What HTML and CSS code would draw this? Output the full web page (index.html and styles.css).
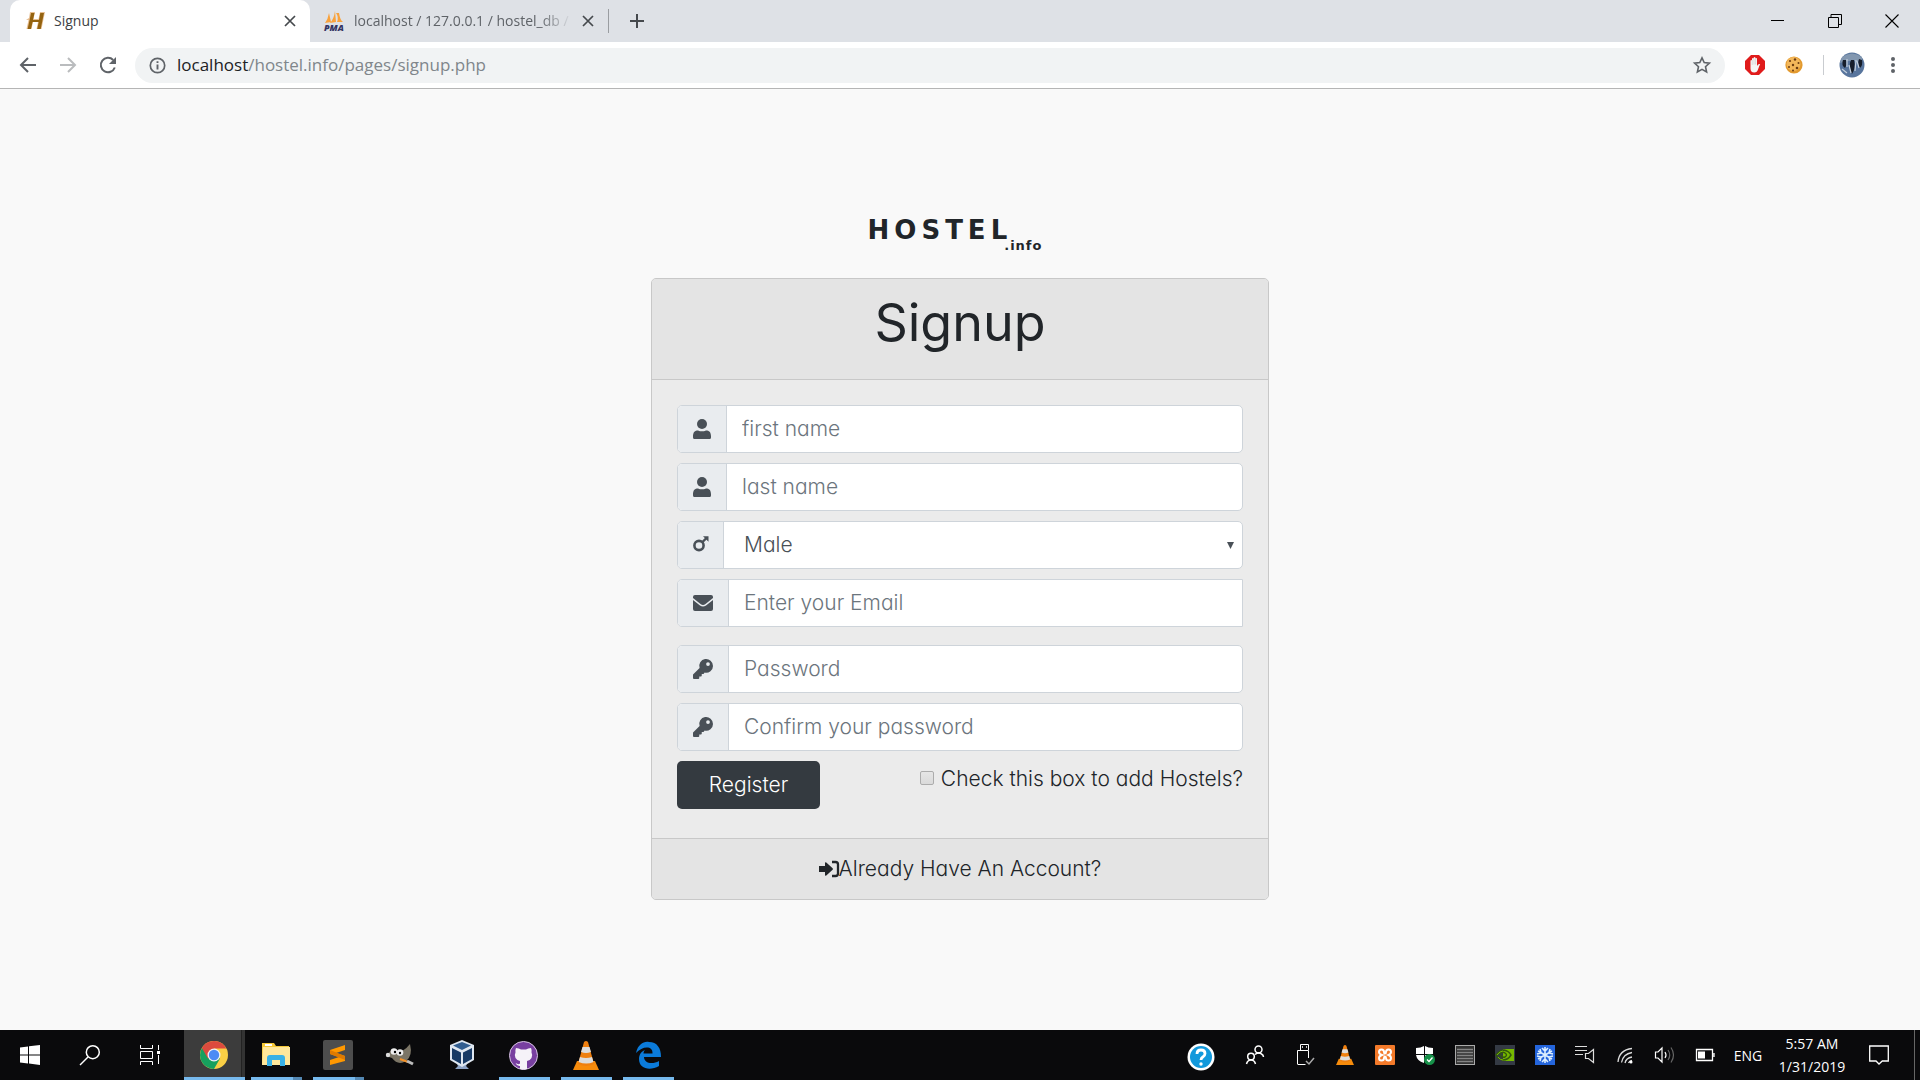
FILE: index.html
```html
<!DOCTYPE html>
<html lang="en">
<head>
<meta charset="utf-8">
<title>Signup</title>
<link rel="stylesheet" href="styles.css">
</head>
<body>
<header class="browser">
  <div class="tabstrip">
    <div class="tab tab-active">
      <svg class="favicon" width="20" height="20" viewBox="0 0 20 20"><path d="M4 1h5L7.500 8h5L14 1h5l-3.500 17h-5l1.500-7H7L5.500 18h-5L2.500 9H0l3-2z" fill="#e8bf93"/><path d="M5 2h3.500L7 9h6l1.300-7H18l-3.300 16H11.200l1.500-7H6.600L5 18H1.600L4 7z" fill="#946310"/></svg>
      <span class="tab-title">Signup</span>
      <button class="icon-btn" aria-label="Close Signup tab"><svg width="12" height="12" viewBox="0 0 12 12"><path d="M1 1l10 10M11 1L1 11" stroke="#45494d" stroke-width="1.700"/></svg></button>
    </div>
    <div class="tab">
      <svg class="favicon" width="20" height="20" viewBox="0 0 20 20"><path d="M5 2Q4 8 1 12l6-1zM11 0q-1 8-5 12l6-1zM12 2q3 4 1 9h6q-3-2-4-9z" fill="#f9a23c"/><text x="0" y="20" font-family="Open Sans, sans-serif" font-size="9" font-weight="800" font-style="italic" fill="#343462">PMA</text></svg>
      <span class="tab-title tab-fade">localhost / 127.0.0.1 / hostel_db / users</span>
      <button class="icon-btn" aria-label="Close database tab"><svg width="12" height="12" viewBox="0 0 12 12"><path d="M1 1l10 10M11 1L1 11" stroke="#45494d" stroke-width="1.700"/></svg></button>
    </div>
    <button class="icon-btn new-tab" aria-label="New tab"><svg width="16" height="16" viewBox="0 0 16 16"><path d="M8 1v14M1 8h14" stroke="#45494d" stroke-width="2"/></svg></button>
    <div class="window-controls">
      <button class="icon-btn" aria-label="Minimize"><svg width="14" height="14" viewBox="0 0 14 14"><path d="M0 6.500h13" stroke="#000"/></svg></button>
      <button class="icon-btn" aria-label="Restore"><svg width="14" height="14" viewBox="0 0 14 14"><path d="M.5 3.500h10v10H.5zM3 3.500v-3h10.500v10H11" fill="none" stroke="#000"/></svg></button>
      <button class="icon-btn" aria-label="Close"><svg width="14" height="14" viewBox="0 0 14 14"><path d="M.5.5l13 13M13.500.5l-13 13" stroke="#000" stroke-width="1.100"/></svg></button>
    </div>
  </div>
  <div class="toolbar">
    <button class="icon-btn nav-btn" aria-label="Back"><svg width="18" height="18" viewBox="0 0 18 18"><path d="M17 9H2.500M9 2L2 9l7 7" fill="none" stroke="#5f6368" stroke-width="2"/></svg></button>
    <button class="icon-btn nav-btn" aria-label="Forward"><svg width="18" height="18" viewBox="0 0 18 18"><path d="M1 9h14.500M9 2l7 7-7 7" fill="none" stroke="#babcbe" stroke-width="2"/></svg></button>
    <button class="icon-btn nav-btn" aria-label="Reload"><svg width="18" height="18" viewBox="0 0 18 18"><path d="M15.800 11.500A7.200 7.200 0 1 1 14.200 4" fill="none" stroke="#5f6368" stroke-width="2"/><path d="M17 1v7h-7z" fill="#5f6368"/></svg></button>
    <div class="omnibox">
      <svg width="17" height="17" viewBox="0 0 17 17"><circle cx="8.500" cy="8.500" r="7.200" fill="none" stroke="#5f6368" stroke-width="1.700"/><path d="M8.500 7.500v5M8.500 4.200v1.900" stroke="#5f6368" stroke-width="1.900"/></svg>
      <span class="url"><b>localhost</b>/hostel.info/pages/signup.php</span>
      <svg width="18" height="18" viewBox="0 0 18 18"><path d="M9 1.800l2.200 4.800 5.200.6-3.900 3.500 1.100 5.200L9 13.300l-4.600 2.600 1.100-5.200L1.600 7.200l5.200-.6z" fill="none" stroke="#5f6368" stroke-width="1.600"/></svg>
    </div>
    <div class="extensions">
      <svg width="20" height="20" viewBox="0 0 20 20"><path d="M6 0h8l6 6v8l-6 6H6l-6-6V6z" fill="#e01b1b"/><path d="M5.500 11V5.500q1-1 1.500 0V3.500q1-1 1.700 0V2.500q1-1 1.700 0v1q1-1 1.600 0V11q1-2.500 3.200-2-1 2-2 5-1 3.500-4 3.500-3.700 0-3.700-4z" fill="#f5f5f5"/><path d="M7.200 5v5M9 4v5.500M10.600 4v5.500" stroke="#c9c9c9" stroke-width=".6"/></svg>
      <svg width="18" height="18" viewBox="0 0 18 18"><circle cx="9" cy="9" r="8.600" fill="#e39a2f"/><circle cx="8.500" cy="8" r="7" fill="#f3b75a"/><g fill="#6d3d12"><circle cx="5" cy="5" r="1.100"/><circle cx="10" cy="3.500" r="1.200"/><circle cx="13.500" cy="7" r="1"/><circle cx="8" cy="9" r="1.200"/><circle cx="4" cy="11" r="1"/><circle cx="12" cy="12" r="1.300"/><circle cx="8" cy="14.500" r="1"/></g></svg>
      <span class="divider"></span>
      <svg class="avatar" width="26" height="26" viewBox="0 0 26 26"><circle cx="13" cy="13" r="12.500" fill="#58759d"/><path d="M3 5q10-7 20 0v5Q12 7 1 11z" fill="#8297b0"/><path d="M4 8q-2 5 2 8 2-3 1-8zM12 8q-3 6 1 14 4-6 2-14zM20 7q-2 5 1 9 3-3 2-8z" fill="#171e2a"/><path d="M8 7v8M10 13l2 8M17 8l-1 11M18 9l2 7M3 17l5 4" stroke="#c3cfdd" stroke-width="1.200"/></svg>
      <button class="icon-btn" aria-label="Menu"><svg width="6" height="18" viewBox="0 0 6 18" fill="#5f6368"><circle cx="3" cy="3" r="2"/><circle cx="3" cy="9" r="2"/><circle cx="3" cy="15" r="2"/></svg></button>
    </div>
  </div>
</header>

<main class="page">
  <div class="brand"><span class="brand-name">HOSTEL</span><sub class="brand-suffix">.info</sub></div>
  <form class="card">
    <div class="card-header"><h1>Signup</h1></div>
    <div class="card-body">
      <div class="field">
        <label class="addon addon-user" for="first" aria-label="First name"><svg width="18" height="20" viewBox="0 0 18 20" fill="#495057"><circle cx="9" cy="5" r="5"/><path d="M0 17.500C0 13 2 11.500 5 11.500q4 1.700 8 0c3 0 5 1.500 5 6v1q0 1.500-1.500 1.500h-15Q0 20 0 18.500z"/></svg></label>
        <input id="first" class="control" type="text" placeholder="first name">
      </div>
      <div class="field">
        <label class="addon addon-user" for="last" aria-label="Last name"><svg width="18" height="20" viewBox="0 0 18 20" fill="#495057"><circle cx="9" cy="5" r="5"/><path d="M0 17.500C0 13 2 11.500 5 11.500q4 1.700 8 0c3 0 5 1.500 5 6v1q0 1.500-1.500 1.500h-15Q0 20 0 18.500z"/></svg></label>
        <input id="last" class="control" type="text" placeholder="last name">
      </div>
      <div class="field">
        <label class="addon addon-gender" for="gender" aria-label="Gender"><svg width="16" height="20" viewBox="0 0 16 20"><circle cx="6" cy="10.500" r="4.600" fill="none" stroke="#495057" stroke-width="2.600"/><path d="M9 7.500l4.500-4.500" stroke="#495057" stroke-width="2.400"/><path d="M10 1.200h5.500v5.500z" fill="#495057"/></svg></label>
        <select id="gender" class="control select"><option>Male</option><option>Female</option></select>
        <svg class="caret" width="7" height="7" viewBox="0 0 7 7"><path d="M0 0h7L3.500 7z" fill="#495057"/></svg>
      </div>
      <div class="field field-email">
        <label class="addon" for="email" aria-label="Email"><svg width="20" height="16" viewBox="0 0 20 16" fill="#495057"><path d="M0 3V2Q0 0 2 0h16q2 0 2 2v1l-7.500 6q-2.500 2-5 0z"/><path d="M0 5l7 5.500q3 2 6 0L20 5v9q0 2-2 2H2q-2 0-2-2z"/></svg></label>
        <input id="email" class="control" type="email" placeholder="Enter your Email">
      </div>
      <div class="field">
        <label class="addon" for="pass" aria-label="Password"><svg width="20" height="20" viewBox="0 0 512 512"><path fill="#495057" d="M512 176a176 176 0 0 1-213 172l-24 27a24 24 0 0 1-18 8h-33v40a24 24 0 0 1-24 24h-40v41a24 24 0 0 1-24 24H24a24 24 0 0 1-24-24v-78q0-10 7-17l162-162A176 176 0 1 1 512 176zM336 128a48 48 0 1 0 96 0 48 48 0 1 0-96 0z" fill-rule="evenodd"/></svg></label>
        <input id="pass" class="control" type="password" placeholder="Password">
      </div>
      <div class="field">
        <label class="addon" for="confirm" aria-label="Confirm password"><svg width="20" height="20" viewBox="0 0 512 512"><path fill="#495057" d="M512 176a176 176 0 0 1-213 172l-24 27a24 24 0 0 1-18 8h-33v40a24 24 0 0 1-24 24h-40v41a24 24 0 0 1-24 24H24a24 24 0 0 1-24-24v-78q0-10 7-17l162-162A176 176 0 1 1 512 176zM336 128a48 48 0 1 0 96 0 48 48 0 1 0-96 0z" fill-rule="evenodd"/></svg></label>
        <input id="confirm" class="control" type="password" placeholder="Confirm your password">
      </div>
      <div class="actions">
        <button class="register" type="submit">Register</button>
        <label class="check"><input type="checkbox">Check this box to add Hostels?</label>
      </div>
    </div>
    <div class="card-footer"><a href="#login"><svg width="20" height="18" viewBox="0 0 20 18" fill="#212529"><path d="M0 6h6V3.200q0-1.700 1.300-.6l6.300 5.600q.8.800 0 1.600l-6.300 5.600Q6 16.500 6 14.800V12H0z"/><path d="M13 2h3.500Q19 2 19 4.500v9q0 2.500-2.500 2.500H13" fill="none" stroke="#212529" stroke-width="2.300"/></svg>Already Have An Account?</a></div>
  </form>
</main>

<footer class="taskbar">
  <div class="system-buttons">
    <button class="icon-btn" aria-label="Start"><svg width="20" height="20" viewBox="0 0 20 20" fill="#fff"><path d="M0 2.500l8-1.100v8.100H0zM9 1.300L20 0v9.500H9zM0 10.500h8v8.100l-8-1.100zM9 10.500h11V20L9 18.600z"/></svg></button>
    <button class="icon-btn" aria-label="Search"><svg width="20" height="20" viewBox="0 0 20 20" fill="none" stroke="#fff" stroke-width="1.500"><circle cx="12.800" cy="7.200" r="6.500"/><path d="M8 12l-8 8"/></svg></button>
    <button class="icon-btn" aria-label="Task view"><svg width="20" height="20" viewBox="0 0 20 20" fill="none" stroke="#fff"><path d="M.5 0v3.500h12V0M.5 20v-3.500h12V20M.5 6.500h12v7H.5zM18.500 0v5M18.500 10v9"/><path d="M17 7.500h3" stroke-width="3"/></svg></button>
  </div>
  <div class="apps">
    <button class="app app-current app-open" aria-label="Chrome"><svg width="28" height="28" viewBox="0 0 28 28"><circle cx="14" cy="14" r="14" fill="#f9cf45"/><path d="M14 14L1.900 7A14 14 0 0 0 14 28l6-10.500z" fill="#17a05e"/><path d="M14 14v-6.500h12.400A14 14 0 0 0 1.900 7l6 10.500z" fill="#dc4b3e"/><circle cx="14" cy="14" r="6.500" fill="#f2f2f2"/><circle cx="14" cy="14" r="5.200" fill="#4c8bf5"/></svg></button>
    <button class="app app-open app-many" aria-label="File Explorer"><svg width="28" height="24" viewBox="0 0 28 24"><path d="M0 0h12l2 3h13v19H0z" fill="#f5c838"/><path d="M1 4h27v18H0z" fill="#ffe79b"/><path d="M3 2h7" stroke="#fff" stroke-width="2"/><path d="M5 23V15q0-3 3-3h12q3 0 3 3v8h-5v-6h-8v6z" fill="#39b1e6"/></svg></button>
    <button class="app app-open app-many" aria-label="Sublime Text"><svg width="30" height="30" viewBox="0 0 30 30"><rect width="30" height="30" rx="2" fill="#4d4d4d"/><path d="M7 10l15-5v5l-9 3 9 3v5L7 25v-5l9-3-9-3z" fill="#ff9800"/><path d="M7 10v4l15 6v-4z" fill="#df7a00"/></svg></button>
    <button class="app" aria-label="GIMP"><svg width="28" height="24" viewBox="0 0 28 24"><path d="M5 7q3 0 4 2 8 1 15-8 3 12-4 17-8 5-14-3L0 13q0-3 3-3z" fill="#7b7566"/><circle cx="2" cy="12" r="2.200" fill="#ddd"/><circle cx="8" cy="8.500" r="3.300" fill="#eee"/><circle cx="14" cy="9.500" r="3.300" fill="#eee"/><circle cx="9" cy="9" r="1.200"/><circle cx="14" cy="10" r="1.200"/><path d="M14 16l8 3" stroke="#f39228" stroke-width="2"/><path d="M21 18l6 3" stroke="#bbb" stroke-width="3"/></svg></button>
    <button class="app" aria-label="VirtualBox"><svg width="26" height="30" viewBox="0 0 26 30"><path d="M7 22h12l-2 4 3 3H6l3-3z" fill="#8da3c6"/><path d="M13 0l12 5v15l-12 7L1 20V5z" fill="#dfe7f1"/><path d="M13 2l9 3.500L13 10 4 5.500z" fill="#315d90"/><path d="M3 8l9 4.500V24l-9-5zM23 8l-9 4.500V24l9-5z" fill="#173a66"/></svg></button>
    <button class="app app-open" aria-label="GitHub Desktop"><svg width="29" height="29" viewBox="0 0 29 29"><circle cx="14.500" cy="14.500" r="14" fill="#783fa0" stroke="#d7c5e3"/><path d="M7 7q3 0 5 1.500h5Q19 7 22 7q1 2 .5 4.500Q24 14 22.500 17q-1.300 2.500-4.500 3v8q-3.500 1-7 0v-3q-3 .5-4.500-3 3 2 4.500.500V20q-3-.5-4.500-3-1.500-3 0-5.500Q6 9 7 7z" fill="#f5f2f8"/></svg></button>
    <button class="app app-open" aria-label="VLC"><svg width="26" height="29" viewBox="0 0 26 29"><path d="M4 20h18l4 9H0z" fill="#f78c0c"/><path d="M11 1q2-2 4 0l6 22q-8 4-16 0z" fill="#ef8010"/><path d="M9.500 6h7l1.500 5q-5 2-10 0zM7 16q6 2 12 0l1.500 5q-7 3-15 0z" fill="#ddd"/></svg></button>
    <button class="app app-open" aria-label="Edge"><svg width="26" height="28" viewBox="0 0 26 28"><path d="M1 12C3 3 9 0 14 1c8 0 12 6 12 15H9c0 6 8 8 15 4v5C15 30 4 28 4 18c0-5 3-8 6-9-1 1-1.500 2-1.500 3.500h9C18 4 7 5 1 12z" fill="#0b7bda"/></svg></button>
  </div>
  <div class="tray">
    <span class="tray-help"><svg width="28" height="28" viewBox="0 0 28 28"><circle cx="14" cy="14" r="13.500" fill="#fff"/><circle cx="14" cy="14" r="11" fill="#1299dc"/><path d="M10 11q0-4 4-4t4 3.500q0 2-2 3.300-2 1.200-2 3.200" fill="none" stroke="#fff" stroke-width="2.800"/><circle cx="14" cy="21" r="1.700" fill="#fff"/></svg></span>
    <span class="tray-people"><svg width="18" height="20" viewBox="0 0 18 20" fill="none" stroke="#fff" stroke-width="1.500"><circle cx="12.500" cy="4.500" r="3.500"/><circle cx="5" cy="11.500" r="3.300"/><path d="M.5 19q1-4 4.500-4t4.500 4M9 9.500q3.500-3 6.500-.5 2 1 2 3"/></svg></span>
    <span class="tray-icon"><svg width="16" height="22" viewBox="0 0 16 22" fill="none" stroke="#fff"><path d="M3.500 6V.5h8V6M.5 20V6.500h11V14M.5 20.500h8"/><path d="M5 3h1M9 3h1" stroke-width="1.500"/><path d="M9 17l3 3 5-6" stroke="#aaa" stroke-width="1.500"/></svg></span>
    <span class="tray-icon"><svg width="18" height="20" viewBox="0 0 26 29"><path d="M4 20h18l4 9H0z" fill="#f78c0c"/><path d="M11 1q2-2 4 0l6 22q-8 4-16 0z" fill="#ef8010"/><path d="M9.500 6h7l1.500 5q-5 2-10 0zM7 16q6 2 12 0l1.500 5q-7 3-15 0z" fill="#ddd"/></svg></span>
    <span class="tray-icon"><svg width="20" height="20" viewBox="0 0 20 20"><rect width="20" height="20" rx="1" fill="#f47a2a"/><path d="M7 10q-3-1-3-3 0-2.500 2.500-2.500Q9 4.500 9 7q0 1.500 1 1.500T11 7q0-2.500 2.500-2.500T16 7q0 2-2.500 3 2.500 1 2.500 3 0 2.500-2.500 2.500T11 13q0-1.500-1-1.500T9 13q0 2.500-2.500 2.500T4 13q0-2 3-3z" fill="none" stroke="#fff" stroke-width="2"/></svg></span>
    <span class="tray-icon"><svg width="20" height="20" viewBox="0 0 20 20"><path d="M9 1v8H1V3q5 0 8-2zm1 0q3 2 8 2v6h-8zM1 10h8v8q-7-2-8-8zm9 0h8q-1 6-8 8z" fill="#fff"/><circle cx="14.500" cy="14.500" r="5.500" fill="#169149"/><path d="M12 14.500l2 2 3.500-4" fill="none" stroke="#fff" stroke-width="1.300"/></svg></span>
    <span class="tray-icon"><svg width="20" height="20" viewBox="0 0 20 20"><rect x=".5" y=".5" width="19" height="19" fill="#333" stroke="#aaa"/><path d="M2 4.500h16M2 7.500h16M2 10.500h16M2 13.500h16M2 16.500h16" stroke="#858585" stroke-width="1.500"/></svg></span>
    <span class="tray-icon"><svg width="20" height="20" viewBox="0 0 20 20"><rect width="20" height="20" fill="#343a44"/><path d="M8 4h11v12H8z" fill="#76b900"/><path d="M1 10q4-5 8-5 5 1 7 5-3 5-8 5-5-1-7-5zM4 10q3-4 6-2 3 2 0 4-3 1-4-2" fill="none" stroke="#33580c" stroke-width="1.500"/><path d="M2 10q3-4 6-4M3 12q2 3 5 3" fill="none" stroke="#76b900"/></svg></span>
    <span class="tray-icon"><svg width="20" height="20" viewBox="0 0 20 20"><rect width="20" height="20" fill="#2465dc"/><path d="M10 2v16M3 6l14 8M17 6L3 14M7 3l3 3 3-3M7 17l3-3 3 3M2 9l4-1-1-4M18 9l-4-1 1-4M2 11l4 1-1 4M18 11l-4 1 1 4" fill="none" stroke="#dcefff" stroke-width="1.600"/></svg></span>
    <span class="tray-icon"><svg width="20" height="20" viewBox="0 0 20 20" fill="none" stroke="#ddd" stroke-width="1.200"><path d="M0 1.500h12M0 5.500h12M0 9.500h8M10.500 8.500h3l5-4v13l-5-4h-3z"/></svg></span>
    <span class="tray-icon"><svg width="17" height="17" viewBox="0 0 17 17" fill="none" stroke="#ddd" stroke-width="1.300"><path d="M1 15Q2 3 15 1.500M4.500 15.500Q6 7 15 5.500M8 16q1-5 7-6M11.500 16q1-2 3.500-2.500"/><circle cx="14" cy="15" r="1.500" fill="#fff" stroke="none"/></svg></span>
    <span class="tray-icon"><svg width="20" height="18" viewBox="0 0 20 18" fill="none" stroke="#fff" stroke-width="1.200"><path d="M.5 6H3l4-4v14l-4-4H.5z"/><path d="M10 6q2 3 0 6"/><path d="M13 4q3.500 5 0 10M16 1.500q5 7.500 0 15" stroke="#666"/></svg></span>
    <span class="tray-icon"><svg width="19" height="12" viewBox="0 0 19 12"><path d="M.5.5h16v11H.5zM18 4v4" fill="none" stroke="#fff" stroke-width="1.300"/><path d="M2 2.500h7v7H2z" fill="#fff"/></svg></span>
    <span class="tray-lang">ENG</span>
    <div class="clock"><span>5:57 AM</span><span>1/31/2019</span></div>
    <button class="icon-btn notices" aria-label="Notifications"><svg width="20" height="20" viewBox="0 0 20 20" fill="none" stroke="#fff" stroke-width="1.300"><path d="M.7 1h18.600v15h-6L10 19l-3-3H.7z"/></svg></button>
    <span class="show-desktop"></span>
  </div>
</footer>
</body>
</html>
```
FILE: styles.css
```css
* { box-sizing: border-box; }
body {
  margin: 0;
  min-height: 100vh;
  display: flex;
  flex-direction: column;
  background: #f9f9f9;
  color: #212529;
  font-family: Inter, "Liberation Sans", sans-serif;
  font-size: 21px;
  font-weight: 300;
  line-height: 30px;
}
svg { display: block; flex: none; overflow: visible; }
button, input, select { font: inherit; color: inherit; font-feature-settings: inherit; }
.icon-btn {
  display: flex;
  align-items: center;
  justify-content: center;
  padding: 0;
  border: 0;
  background: none;
}

/* Browser window */
.browser { font-family: "Open Sans", "Noto Sans", sans-serif; font-weight: 400; border-bottom: 1px solid #b5b5b5; background: #fff; }
.tabstrip { display: flex; align-items: center; height: 42px; padding-left: 10px; background: #dee1e6; }
.tab { display: flex; align-items: center; height: 42px; width: 298px; padding: 0 14px; gap: 10px; color: #5f6368; font-size: 14px; line-height: 20px; }
.tab-active { width: 300px; padding-left: 16px; gap: 8px; background: #fff; border-radius: 10px 10px 0 0; color: #3c4043; }
.tab-title { flex: 1; overflow: hidden; white-space: nowrap; }
.tab-fade { -webkit-mask-image: linear-gradient(90deg, #000 85%, transparent); mask-image: linear-gradient(90deg, #000 85%, transparent); }
.new-tab { width: 56px; height: 24px; border-left: 1px solid #9a9da1; }
.window-controls { display: flex; margin-left: auto; }
.window-controls .icon-btn { width: 57px; height: 36px; }
.toolbar { display: flex; align-items: center; height: 46px; padding-left: 8px; }
.nav-btn { width: 40px; height: 36px; }
.omnibox { display: flex; flex: 1; align-items: center; gap: 11px; height: 35px; margin-left: 7px; padding: 0 14px; border-radius: 18px; background: #f1f3f4; color: #80868b; font-size: 17px; line-height: 24px; }
.url { flex: 1; }
.url b { font-weight: 400; color: #202124; }
.extensions { display: flex; align-items: center; gap: 20px; padding: 0 24px 0 20px; }
.divider { width: 1px; height: 20px; background: #c9ccd0; }
.avatar { margin: 0 5px 0 -5px; }

/* Signup page */
.page { flex: 1; display: flex; flex-direction: column; align-items: center; padding: 126px 16px 40px; font-feature-settings: "cv11"; }
.brand { height: 63px; padding-right: 10px; font-family: "DejaVu Sans", Verdana, sans-serif; font-weight: 700; line-height: 30px; }
.brand-name { font-size: 26px; letter-spacing: 5px; }
.brand-suffix { margin-left: -8px; font-size: 13px; line-height: 16px; letter-spacing: 1px; vertical-align: -11px; }
.card { width: 100%; max-width: 618px; border: 1px solid #c8c8c8; border-radius: 5px; background: #ebebeb; }
.card-header { height: 101px; padding: 14px 25px; border-bottom: 1px solid #c8c8c8; background: #e4e4e4; text-align: center; border-radius: 4px 4px 0 0; }
.card-header h1 { margin: 0; font-size: 52px; font-weight: 400; line-height: 60px; }
.card-body { padding: 25px 25px 29px; display: flex; flex-direction: column; gap: 10px; }
.field { position: relative; display: flex; height: 48px; border: 1px solid #ced4da; border-radius: 5px; background: #fff; overflow: hidden; }
.field-email { border-radius: 5px 0 0 5px; margin-bottom: 8px; }
.addon { display: flex; align-items: center; justify-content: center; width: 51px; border-right: 1px solid #ced4da; background: #e9ecef; }
.addon-user { width: 49px; }
.addon-gender { width: 46px; }
.control { flex: 1; min-width: 0; padding: 0 15px; border: 0; background: none; color: #495057; outline: 0; }
.control::placeholder { color: #6c757d; opacity: 1; }
.select { appearance: none; padding-left: 20px; }
.caret { position: absolute; right: 8px; top: 20px; pointer-events: none; }
.actions { display: flex; justify-content: space-between; align-items: flex-start; }
.register { width: 143px; height: 48px; padding: 0; border: 0; border-radius: 5px; background: #343a40; color: #fff; }
.check { display: flex; align-items: center; gap: 7px; padding-top: 3px; }
.check input { appearance: none; width: 14px; height: 14px; margin: 0 0 3px; border: 1px solid #acacac; border-radius: 2px; background: linear-gradient(#e6e6e6, #dadada); }
.card-footer { display: flex; align-items: center; justify-content: center; height: 61px; border-top: 1px solid #c8c8c8; background: #e4e4e4; border-radius: 0 0 4px 4px; }
.card-footer a { display: flex; align-items: center; color: #212529; text-decoration: none; }

/* Taskbar */
.taskbar { display: flex; height: 50px; background: #0a0a0c; color: #fff; font-family: "Open Sans", "Noto Sans", sans-serif; font-weight: 400; }
.system-buttons { display: flex; }
.system-buttons .icon-btn { width: 60px; height: 50px; }
.apps { display: flex; gap: 11px; margin-left: 4px; }
.app { display: flex; align-items: center; justify-content: center; width: 51px; height: 50px; padding: 3px 2px 0 0; border: 0; border-bottom: 3px solid transparent; background: none; }
.app-open { border-bottom-color: #76b9ed; }
.app-current { width: 61px; margin-right: -5px; background: linear-gradient(90deg, #3c3c3c 57px, #222 57px, #222 58px, #333 58px); }
.app-many { border-image: linear-gradient(90deg, #76b9ed 40px, #5488b3 40px) 3; border-width: 0 0 3px; }
.tray { display: flex; align-items: center; margin-left: auto; font-size: 14px; line-height: 23px; }
.tray span { display: flex; justify-content: center; }
.tray-help { width: 48px; padding-top: 3px; }
.tray-people { width: 60px; }
.tray-icon { width: 40px; }
.tray-lang { width: 46px; }
.clock { width: 82px; }
.notices { width: 52px; }
.tray .show-desktop { width: 6px; height: 50px; margin-left: 9px; border-left: 1px solid #666; }
```
